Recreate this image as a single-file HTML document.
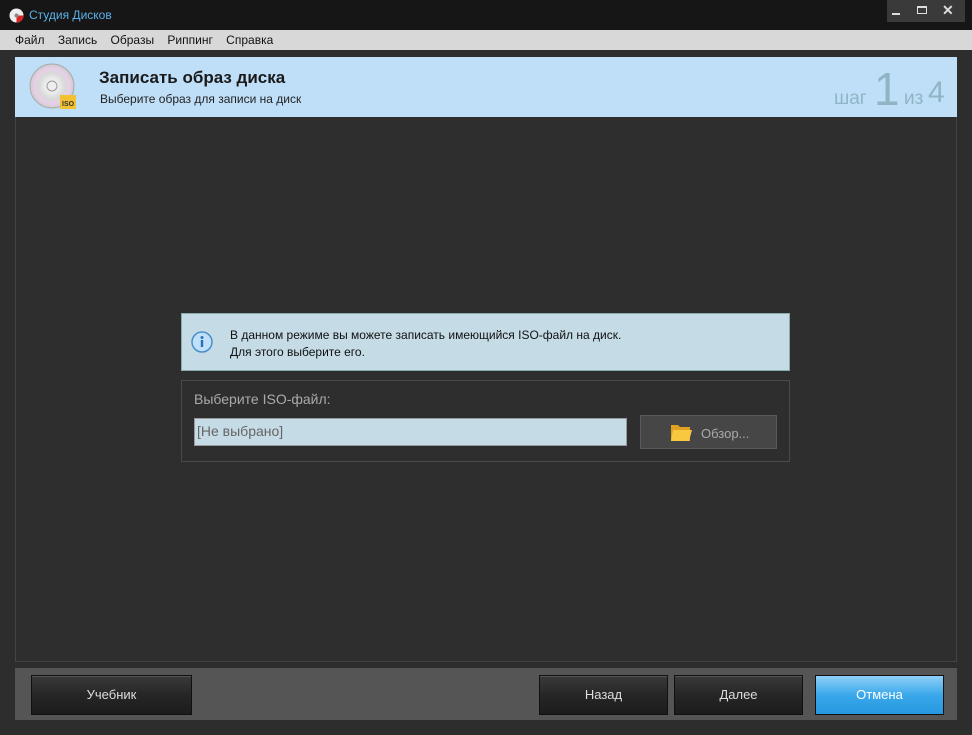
<!DOCTYPE html><html><head><meta charset="utf-8"><style>
*{margin:0;padding:0;box-sizing:border-box}
body{width:972px;height:735px;background:#2d2d2d;font-family:"Liberation Sans",sans-serif;position:relative;overflow:hidden}
.a{position:absolute}
.btn{position:absolute;top:675px;height:40px;border:1px solid #111;background:linear-gradient(#3a3a3a,#262626 50%,#1c1c1c);color:#ddd;font-size:13px;text-align:center;line-height:38px;box-shadow:inset 0 1px 0 #555}
</style></head><body>
<div class="a" style="left:0;top:0;width:972px;height:30px;background:#161616"></div>
<svg class="a" style="left:9px;top:8px" width="15" height="15"><circle cx="7.5" cy="7.5" r="7" fill="#eee"/><path d="M7.5 7.5 L14.5 7.5 A7 7 0 0 1 7.5 14.5Z" fill="#d22"/><circle cx="7.5" cy="7.5" r="2" fill="#888"/></svg>
<div class="a" style="left:29px;top:8px;color:#5ab0e8;font-size:12px">Студия Дисков</div>
<div class="a" style="left:887px;top:0;width:78px;height:22px;background:#3a3a3a"></div>
<div class="a" style="left:892px;top:13px;width:8px;height:2px;background:#ddd"></div>
<div class="a" style="left:917px;top:6px;width:10px;height:8px;border:1px solid #ddd;border-top-width:2px"></div>
<div class="a" style="left:942px;top:2px;color:#ddd;font-size:14px;font-weight:bold">✕</div>
<div class="a" style="left:0;top:30px;width:972px;height:20px;background:#d8d8d8"></div>
<div class="a" style="left:15px;top:33px;font-size:12px;color:#111;word-spacing:0">Файл&nbsp;&nbsp;&nbsp; Запись&nbsp;&nbsp;&nbsp; Образы&nbsp;&nbsp;&nbsp; Риппинг&nbsp;&nbsp;&nbsp; Справка</div>
<div class="a" style="left:15px;top:57px;width:942px;height:60px;background:#bfdff8"></div>
<svg class="a" style="left:29px;top:63px" width="50" height="50"><defs><radialGradient id="g"><stop offset="0.2" stop-color="#f4f4f4"/><stop offset="0.6" stop-color="#d8d8d8"/><stop offset="0.8" stop-color="#e8cfe8"/><stop offset="1" stop-color="#ccc"/></radialGradient></defs><circle cx="23" cy="23" r="22" fill="url(#g)" stroke="#aaa"/><circle cx="23" cy="23" r="5" fill="#eee" stroke="#999"/><rect x="31" y="32" width="16" height="14" fill="#f2c030"/><text x="33" y="43" font-size="7" font-family="Liberation Sans" fill="#333" font-weight="bold">ISO</text></svg>
<div class="a" style="left:99px;top:68px;font-size:17px;font-weight:bold;color:#1a1a1a">Записать образ диска</div>
<div class="a" style="left:100px;top:92px;font-size:12px;color:#222">Выберите образ для записи на диск</div>
<div class="a" style="left:834px;top:88px;font-size:19px;color:#8fb5c5">шаг</div>
<div class="a" style="left:874px;top:66px;font-size:46px;color:#8fb5c5;line-height:46px">1</div>
<div class="a" style="left:904px;top:88px;font-size:19px;color:#8fb5c5">из</div>
<div class="a" style="left:928px;top:78px;font-size:30px;color:#8fb5c5;line-height:30px">4</div>
<div class="a" style="left:15px;top:117px;width:942px;height:545px;border:1px solid #444;border-top:none;background:#2e2e2e"></div>
<div class="a" style="left:181px;top:313px;width:609px;height:58px;background:#c5dbe5;border:1px solid #8aa"></div>
<svg class="a" style="left:191px;top:331px" width="22" height="22"><circle cx="11" cy="11" r="10" fill="#bfe0f8" stroke="#4a90c8" stroke-width="1.5"/><circle cx="11" cy="6.5" r="1.5" fill="#2a70b8"/><rect x="9.8" y="9" width="2.4" height="7" fill="#2a70b8"/></svg>
<div class="a" style="left:230px;top:327px;font-size:12px;color:#111;line-height:17px">В данном режиме вы можете записать имеющийся ISO-файл на диск.<br>Для этого выберите его.</div>
<div class="a" style="left:181px;top:380px;width:609px;height:82px;border:1px solid #4a4a4a"></div>
<div class="a" style="left:194px;top:391px;font-size:14px;color:#aaa">Выберите ISO-файл:</div>
<div class="a" style="left:194px;top:418px;width:433px;height:28px;background:#c5dbe5;border:1px solid #999;font-size:14px;color:#666;padding:4px 2px">[Не выбрано]</div>
<div class="a" style="left:640px;top:415px;width:137px;height:34px;background:#464646;border:1px solid #5a5a5a"></div>
<svg class="a" style="left:669px;top:421px" width="24" height="22"><path d="M2 4h7l2 2h10v14H2z" fill="#e0a020"/><path d="M4 9h19l-3 11H2z" fill="#f8c840"/></svg>
<div class="a" style="left:701px;top:426px;font-size:13px;color:#aaa">Обзор...</div>
<div class="a" style="left:15px;top:668px;width:942px;height:52px;background:#555"></div>
<div class="btn" style="left:31px;width:161px">Учебник</div>
<div class="btn" style="left:539px;width:129px">Назад</div>
<div class="btn" style="left:674px;width:129px">Далее</div>
<div class="btn" style="left:815px;width:129px;background:linear-gradient(#8fd0f8,#3aa8ea 50%,#2698e0);color:#fff;box-shadow:none">Отмена</div>
</body></html>
